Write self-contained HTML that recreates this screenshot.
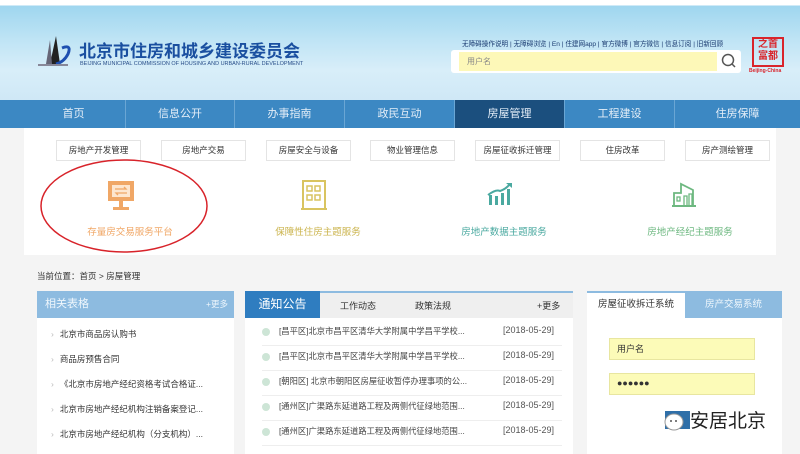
<!DOCTYPE html>
<html><head><meta charset="utf-8"><style>
*{margin:0;padding:0;box-sizing:border-box}
body{width:800px;height:454px;overflow:hidden;background:#f4f4f4;font-family:"Liberation Sans","Noto Sans CJK SC",sans-serif;position:relative;font-size:9px;color:#333}
.abs{position:absolute}
.hdr{left:0;top:0;width:800px;height:100px;background:linear-gradient(180deg,#fff 0,#fff 5px,#9fd6ef 6px,#bfe4f5 40px,#d8eef9 70px,#cfe8f6 100px)}
.nav{left:0;top:100px;width:800px;height:28px;background:#3c88c3;display:flex}
.nav div{height:28px;line-height:28px;color:#e4eef8;font-size:11px;text-align:center;border-right:1px solid #6aa6d4}
.panel{left:24px;top:128px;width:752px;height:127px;background:#fff}
.btn{top:140px;height:21px;border:1px solid #e4e4e4;background:#fff;font-size:8.5px;text-align:center;line-height:19px;color:#333;width:85px}
.lbl{top:224px;font-size:9.5px;width:150px;text-align:center}
.box{background:#fff}
.li{position:absolute;left:14px;font-size:8.5px;color:#333}
.li:before{content:"›";color:#bbb;margin-right:6px}
.nr{position:absolute;left:262px;width:300px;font-size:8.3px;color:#444;height:25px;border-bottom:1px solid #eee}
.nr i{position:absolute;left:0;top:7px;width:8px;height:8px;border-radius:50%;background:#cde5d6}
.nr span{position:absolute;left:17px;top:4px}
.nr b{position:absolute;right:8px;top:4px;font-weight:normal;font-size:9px;color:#555}
</style></head><body>
<div class="abs hdr"></div>
<div class="abs" style="left:0;top:0;width:800px;height:5px;background:#fff"></div>
<svg class="abs" style="left:38px;top:34px" width="40" height="34" viewBox="0 0 40 34"><path d="M18 2 L22 30 L12 30 Z" fill="#222"/><path d="M12 6 L14 30 L8 30 Z" fill="#667"/><path d="M24 14 Q34 10 30 20 Q26 28 18 30" stroke="#1e4fb0" stroke-width="3" fill="none"/><rect x="0" y="30" width="30" height="2" fill="#889"/></svg>
<div class="abs" style="left:79px;top:37px;font-size:17px;font-weight:bold;color:#1a4fa0">北京市住房和城乡建设委员会</div>
<div class="abs" style="left:80px;top:61px;font-size:5.5px;color:#2a4f8a;white-space:nowrap">BEIJING MUNICIPAL COMMISSION OF HOUSING AND URBAN-RURAL DEVELOPMENT</div>
<div class="abs" style="left:462px;top:38px;font-size:6.6px;color:#1a3a70;white-space:nowrap">无障碍操作说明 | 无障碍浏览 | En | 住建网app | 官方微博 | 官方微信 | 信息订阅 | 旧新回顾</div>
<div class="abs" style="left:451px;top:50px;width:290px;height:23px;background:#fff;border-radius:3px"></div>
<div class="abs" style="left:459px;top:52px;width:258px;height:19px;background:#fdf8b8;font-size:8px;color:#888;line-height:19px;padding-left:8px">用户名</div>
<svg class="abs" style="left:721px;top:53px" width="16" height="16"><circle cx="7" cy="7" r="5.5" stroke="#555" stroke-width="1.5" fill="none"/><path d="M11 11 L14 14" stroke="#555" stroke-width="1.5"/></svg>
<div class="abs" style="left:752px;top:37px;width:32px;height:30px;border:2px solid #d9242b;color:#d9242b;font-size:10px;line-height:12px;text-align:center;font-weight:bold">之首<br>富都</div>
<div class="abs" style="left:749px;top:68px;font-size:5px;color:#d9242b;font-weight:bold">Beijing-China</div>
<div class="abs nav">
<div style="width:126px;padding-left:22px">首页</div><div style="width:109px">信息公开</div><div style="width:110px">办事指南</div><div style="width:110px">政民互动</div><div style="width:110px;background:#1b4f7e">房屋管理</div><div style="width:110px">工程建设</div><div style="width:125px;border:none">住房保障</div>
</div>
<div class="abs panel"></div>
<div class="abs btn" style="left:56px">房地产开发管理</div>
<div class="abs btn" style="left:161px">房地产交易</div>
<div class="abs btn" style="left:266px">房屋安全与设备</div>
<div class="abs btn" style="left:370px">物业管理信息</div>
<div class="abs btn" style="left:475px">房屋征收拆迁管理</div>
<div class="abs btn" style="left:580px">住房改革</div>
<div class="abs btn" style="left:685px">房产测绘管理</div>
<svg class="abs" style="left:106px;top:179px" width="32" height="34"><rect x="2" y="2" width="26" height="20" fill="#f0a766"/><rect x="6" y="6" width="18" height="12" fill="#fde6cf"/><path d="M9 10h11l-2-2M21 14H10l2 2" stroke="#f0a766" stroke-width="1.3" fill="none"/><rect x="13" y="22" width="4" height="6" fill="#f0a766"/><rect x="7" y="28" width="16" height="3" fill="#f0a766"/></svg>
<svg class="abs" style="left:300px;top:179px" width="28" height="34"><rect x="3" y="2" width="22" height="28" fill="none" stroke="#d9c460" stroke-width="2"/><rect x="7" y="7" width="5" height="5" fill="none" stroke="#d9c460" stroke-width="1.5"/><rect x="15" y="7" width="5" height="5" fill="none" stroke="#d9c460" stroke-width="1.5"/><rect x="7" y="16" width="5" height="5" fill="none" stroke="#d9c460" stroke-width="1.5"/><rect x="15" y="16" width="5" height="5" fill="none" stroke="#d9c460" stroke-width="1.5"/><rect x="1" y="29" width="26" height="2" fill="#d9c460"/></svg>
<svg class="abs" style="left:486px;top:181px" width="28" height="26"><path d="M2 14 Q10 8 14 10 Q20 8 24 3" stroke="#4aa9a0" stroke-width="2" fill="none"/><path d="M20 2h6v5" fill="#4aa9a0"/><rect x="3" y="14" width="3" height="10" fill="#4aa9a0"/><rect x="9" y="15" width="3" height="9" fill="#4aa9a0"/><rect x="15" y="12" width="3" height="12" fill="#4aa9a0"/><rect x="21" y="8" width="3" height="16" fill="#4aa9a0"/></svg>
<svg class="abs" style="left:671px;top:180px" width="28" height="28"><path d="M3 26V13h7V4l12 6v16" stroke="#6db880" stroke-width="1.8" fill="none"/><rect x="6" y="17" width="3" height="4" fill="none" stroke="#6db880" stroke-width="1.3"/><path d="M13 26V16h3v10M18 26V14h3v12" stroke="#6db880" stroke-width="1.3" fill="none"/><rect x="1" y="25" width="24" height="2" fill="#6db880"/></svg>
<div class="abs lbl" style="left:55px;color:#f0a766">存量房交易服务平台</div>
<div class="abs lbl" style="left:243px;color:#cbb44e">保障性住房主题服务</div>
<div class="abs lbl" style="left:429px;color:#4aa9a0">房地产数据主题服务</div>
<div class="abs lbl" style="left:615px;color:#6db880">房地产经纪主题服务</div>
<svg class="abs" style="left:38px;top:158px" width="174" height="100"><ellipse cx="86" cy="48" rx="83" ry="46" stroke="#d8232a" stroke-width="1.5" fill="none"/></svg>
<div class="abs" style="left:37px;top:270px;font-size:8.5px;color:#333">当前位置：首页 &gt; 房屋管理</div>
<div class="abs box" style="left:37px;top:291px;width:197px;height:163px"></div>
<div class="abs" style="left:37px;top:291px;width:197px;height:27px;background:#8dbbe0;color:#eef6fc;font-size:11px;line-height:27px;padding-left:8px">相关表格<span style="position:absolute;right:6px;font-size:8.5px">+更多</span></div>
<div class="abs" style="left:37px;top:291px;width:197px;height:163px">
<div class="li" style="top:37px">北京市商品房认购书</div>
<div class="li" style="top:62px">商品房预售合同</div>
<div class="li" style="top:87px">《北京市房地产经纪资格考试合格证...</div>
<div class="li" style="top:112px">北京市房地产经纪机构注销备案登记...</div>
<div class="li" style="top:137px">北京市房地产经纪机构（分支机构）...</div>
</div>
<div class="abs box" style="left:245px;top:291px;width:328px;height:163px"></div>
<div class="abs" style="left:245px;top:291px;width:328px;height:27px;background:#efefef;border-top:2px solid #8dbbe0"></div>
<div class="abs" style="left:245px;top:291px;width:75px;height:27px;background:#2f7dc0;color:#fff;font-size:12px;line-height:27px;text-align:center">通知公告</div>
<div class="abs" style="left:340px;top:299px;font-size:9px">工作动态</div>
<div class="abs" style="left:415px;top:299px;font-size:9px">政策法规</div>
<div class="abs" style="left:537px;top:299px;font-size:9px">+更多</div>
<div class="nr" style="top:321px"><i></i><span>[昌平区]北京市昌平区清华大学附属中学昌平学校...</span><b>[2018-05-29]</b></div>
<div class="nr" style="top:346px"><i></i><span>[昌平区]北京市昌平区清华大学附属中学昌平学校...</span><b>[2018-05-29]</b></div>
<div class="nr" style="top:371px"><i></i><span>[朝阳区] 北京市朝阳区房屋征收暂停办理事项的公...</span><b>[2018-05-29]</b></div>
<div class="nr" style="top:396px"><i></i><span>[通州区]广渠路东延道路工程及两侧代征绿地范围...</span><b>[2018-05-29]</b></div>
<div class="nr" style="top:421px"><i></i><span>[通州区]广渠路东延道路工程及两侧代征绿地范围...</span><b>[2018-05-29]</b></div>
<div class="abs box" style="left:587px;top:291px;width:195px;height:163px"></div>
<div class="abs" style="left:587px;top:291px;width:195px;height:27px;background:#8dbbe0"></div>
<div class="abs" style="left:587px;top:291px;width:98px;height:28px;background:#fff;border-top:2px solid #8dbbe0;font-size:9.5px;line-height:24px;text-align:center;color:#333">房屋征收拆迁系统</div>
<div class="abs" style="left:685px;top:291px;width:97px;height:27px;font-size:9.5px;line-height:27px;text-align:center;color:#eef6fc">房产交易系统</div>
<div class="abs" style="left:609px;top:338px;width:146px;height:22px;background:#fcfbb8;border:1px solid #e8e6a0;font-size:9px;line-height:20px;padding-left:7px">用户名</div>
<div class="abs" style="left:609px;top:373px;width:146px;height:22px;background:#fcfbb8;border:1px solid #e8e6a0;font-size:9px;line-height:18px;padding-left:7px">●●●●●●</div>
<svg class="abs" style="left:662px;top:408px" width="30" height="26"><path d="M3 3h25v18H3z" fill="#2f6fa8"/><ellipse cx="12" cy="14" rx="9" ry="8" fill="#fff" stroke="#999"/><circle cx="9" cy="13" r="1" fill="#555"/><circle cx="14" cy="13" r="1" fill="#555"/></svg>
<div class="abs" style="left:690px;top:406px;font-size:19px;color:#222">安居北京</div>
</body></html>
